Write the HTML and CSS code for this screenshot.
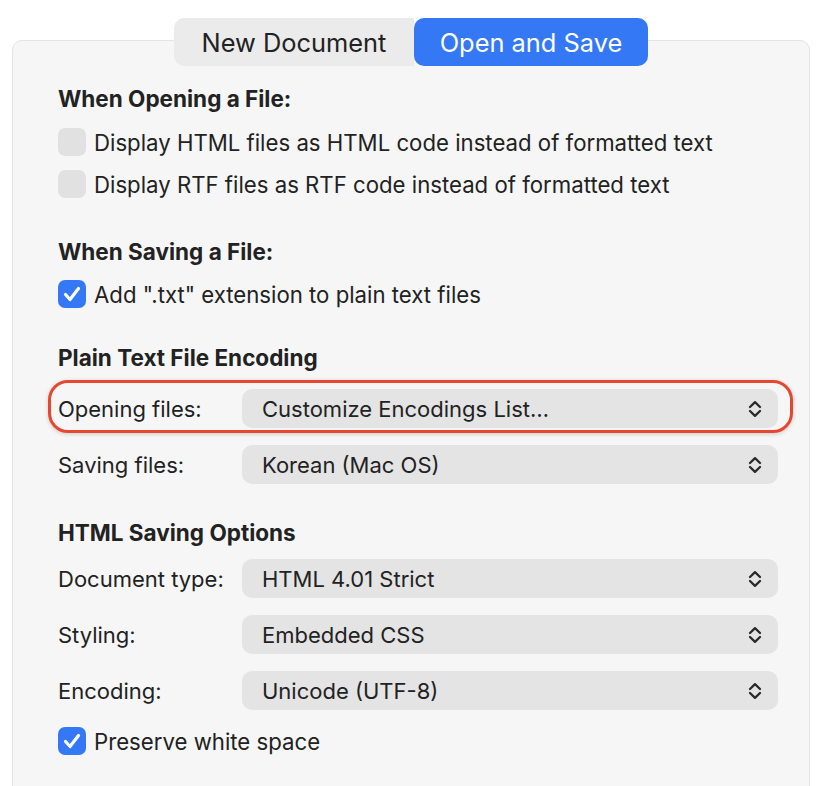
FILE: index.html
```html
<!DOCTYPE html>
<html>
<head>
<meta charset="utf-8">
<link rel="stylesheet" href="styles.css">
</head>
<body>
<div class="panel">
  <div class="tabs">
    <div class="tab">New Document</div>
    <div class="tab active">Open and Save</div>
  </div>
  <div class="content">
    <div class="heading h1">When Opening a File:</div>
    <div class="check cb1"><span class="box"></span>Display HTML files as HTML code instead of formatted text</div>
    <div class="check cb2"><span class="box"></span>Display RTF files as RTF code instead of formatted text</div>
    <div class="heading h2">When Saving a File:</div>
    <div class="check cb3"><span class="box on"><svg viewBox="0 0 28 28" width="28" height="28"><path d="M7.5 14.5 L12 19.5 L20.5 8.5" fill="none" stroke="#fff" stroke-width="3.2" stroke-linecap="round" stroke-linejoin="round"/></svg></span>Add ".txt" extension to plain text files</div>
    <div class="heading h3">Plain Text File Encoding</div>
    <div class="field f1 highlight"><span class="label">Opening files:</span><div class="popup"><span>Customize Encodings List…</span><svg class="chev" viewBox="0 0 14 18" width="14" height="18"><path d="M2 7 L7 2.2 L12 7 M2 11 L7 15.8 L12 11" fill="none" stroke="#2a2a2a" stroke-width="2.3" stroke-linecap="round" stroke-linejoin="round"/></svg></div></div>
    <div class="field f2"><span class="label">Saving files:</span><div class="popup"><span>Korean (Mac OS)</span><svg class="chev" viewBox="0 0 14 18" width="14" height="18"><path d="M2 7 L7 2.2 L12 7 M2 11 L7 15.8 L12 11" fill="none" stroke="#2a2a2a" stroke-width="2.3" stroke-linecap="round" stroke-linejoin="round"/></svg></div></div>
    <div class="heading h4">HTML Saving Options</div>
    <div class="field f3"><span class="label">Document type:</span><div class="popup"><span>HTML 4.01 Strict</span><svg class="chev" viewBox="0 0 14 18" width="14" height="18"><path d="M2 7 L7 2.2 L12 7 M2 11 L7 15.8 L12 11" fill="none" stroke="#2a2a2a" stroke-width="2.3" stroke-linecap="round" stroke-linejoin="round"/></svg></div></div>
    <div class="field f4"><span class="label">Styling:</span><div class="popup"><span>Embedded CSS</span><svg class="chev" viewBox="0 0 14 18" width="14" height="18"><path d="M2 7 L7 2.2 L12 7 M2 11 L7 15.8 L12 11" fill="none" stroke="#2a2a2a" stroke-width="2.3" stroke-linecap="round" stroke-linejoin="round"/></svg></div></div>
    <div class="field f5"><span class="label">Encoding:</span><div class="popup"><span>Unicode (UTF-8)</span><svg class="chev" viewBox="0 0 14 18" width="14" height="18"><path d="M2 7 L7 2.2 L12 7 M2 11 L7 15.8 L12 11" fill="none" stroke="#2a2a2a" stroke-width="2.3" stroke-linecap="round" stroke-linejoin="round"/></svg></div></div>
    <div class="check cb4"><span class="box on"><svg viewBox="0 0 28 28" width="28" height="28"><path d="M7.5 14.5 L12 19.5 L20.5 8.5" fill="none" stroke="#fff" stroke-width="3.2" stroke-linecap="round" stroke-linejoin="round"/></svg></span>Preserve white space</div>
  </div>
</div>
</body>
</html>
```
FILE: styles.css
```css
html, body {
  margin: 0;
  padding: 0;
  background: #ffffff;
  height: 786px;
  overflow: hidden;
}
body {
  font-family: Inter, "Liberation Sans", sans-serif;
  color: #222222;
}
.panel {
  margin: 40px 0 0 12px;
  width: 796px;
  height: 780px;
  background: #f6f6f6;
  border: 1px solid #e4e4e4;
  border-radius: 10px;
  box-sizing: content-box;
}
.tabs {
  display: flex;
  justify-content: center;
  margin-top: -23px;
  height: 48px;
}
.tab {
  display: flex;
  align-items: center;
  justify-content: center;
  height: 48px;
  font-size: 25.4px;
  color: #222222;
  background: #ebebeb;
  width: 240px;
  border-radius: 10px 0 0 10px;
}
.tab.active {
  width: 234px;
  background: #3478f6;
  color: #ffffff;
  border-radius: 10px;
}
.content {
  display: flex;
  flex-direction: column;
  padding-left: 45px;
  padding-right: 31px;
}
.heading {
  height: 28px;
  display: flex;
  align-items: center;
  font-size: 22.5px;
  font-weight: 700;
  color: #222222;
}
.check {
  height: 28px;
  display: flex;
  align-items: center;
  font-size: 22.2px;
  color: #222222;
}
.box {
  width: 28px;
  height: 28px;
  border-radius: 7px;
  background: #e1e1e1;
  margin-right: 8px;
  flex: none;
  display: flex;
}
.box.on {
  background: #3478f6;
}
.field {
  height: 39px;
  display: flex;
  align-items: center;
  font-size: 22px;
  position: relative;
}
.label {
  width: 184px;
  flex: none;
}
.popup {
  flex: 1;
  height: 39px;
  background: #e4e4e4;
  border-radius: 10px;
  display: flex;
  align-items: center;
  justify-content: space-between;
  padding: 0 16px 0 20px;
}
.chev {
  flex: none;
}
.highlight::after {
  content: "";
  position: absolute;
  top: -9px;
  right: -15px;
  bottom: -5px;
  left: -10px;
  border: 3px solid #e8472f;
  border-radius: 20px;
  box-shadow: 0 1px 4px rgba(0,0,0,0.18);
  pointer-events: none;
}
.h1 { margin-top: 18px; }
.cb1 { margin-top: 16px; }
.cb2 { margin-top: 14px; }
.h2 { margin-top: 39px; }
.cb3 { margin-top: 15px; }
.h3 { margin-top: 35px; }
.f1 { margin-top: 18px; }
.f2 { margin-top: 17px; }
.h4 { margin-top: 34px; }
.f3 { margin-top: 13px; }
.f4 { margin-top: 17px; }
.f5 { margin-top: 17px; }
.cb4 { margin-top: 17px; }
```
